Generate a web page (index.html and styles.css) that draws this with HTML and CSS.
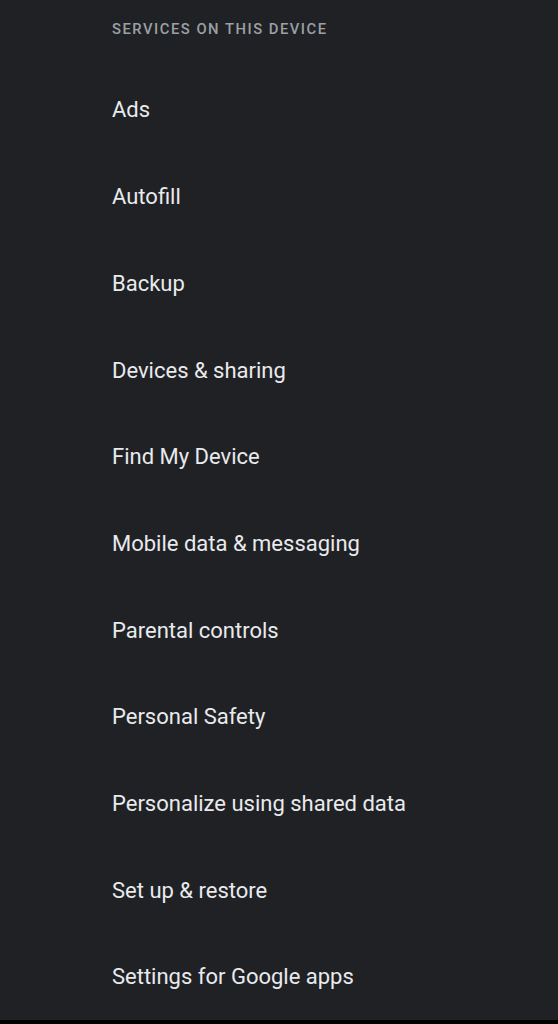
FILE: index.html
```html
<!DOCTYPE html>
<html lang="en">
<head>
    <meta charset="UTF-8">
    <meta name="viewport" content="width=device-width, initial-scale=1.0">
    <title>Services on this device</title>
    <link rel="stylesheet" href="styles.css">
</head>
<body>
    <main class="page">
        <h2 class="section-title">SERVICES ON THIS DEVICE</h2>
        <ul class="service-list">
            <li>Ads</li>
            <li>Autofill</li>
            <li>Backup</li>
            <li>Devices &amp; sharing</li>
            <li>Find My Device</li>
            <li>Mobile data &amp; messaging</li>
            <li>Parental controls</li>
            <li>Personal Safety</li>
            <li>Personalize using shared data</li>
            <li>Set up &amp; restore</li>
            <li>Settings for Google apps</li>
        </ul>
    </main>
    <div class="nav-bar"></div>
</body>
</html>
```

FILE: styles.css
```css
html, body {
    margin: 0;
    padding: 0;
    height: 1024px;
    overflow: hidden;
}
body {
    font-family: Roboto, "Open Sans", sans-serif;
    background-color: #202124;
    display: flex;
    flex-direction: column;
}
.page {
    flex: 1;
    padding-left: 112px;
}
.section-title {
    margin: 0;
    height: 66.6px;
    padding-top: 19px;
    box-sizing: border-box;
    font-size: 14.8px;
    font-weight: 500;
    letter-spacing: 1.5px;
    color: #9aa0a6;
    line-height: 20px;
}
.service-list {
    list-style: none;
    margin: 0;
    padding: 0;
}
.service-list li {
    height: 86.7px;
    display: flex;
    align-items: center;
    font-size: 22px;
    color: #e8eaed;
}
.nav-bar {
    height: 4px;
    background-color: #000;
}
```
